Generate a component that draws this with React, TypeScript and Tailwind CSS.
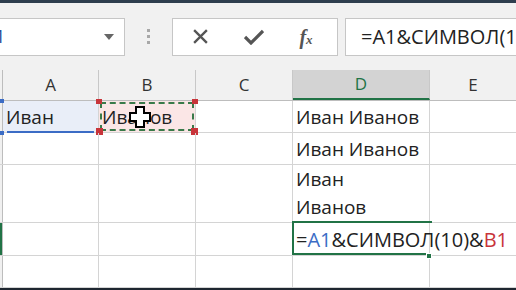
import React from "react";

const font = { fontFamily: '"Open Sans", "Noto Sans", sans-serif' };

const Cell = ({
  w,
  children,
  className = "",
}: {
  w: string;
  children?: React.ReactNode;
  className?: string;
}) => (
  <div
    className={`relative shrink-0 border-r border-[#d4d4d4] flex items-end pl-[3px] pb-[1px] ${w} ${className}`}
  >
    {children}
  </div>
);

const Row = ({ h, children, green = false }: { h: string; children: React.ReactNode; green?: boolean }) => (
  <div className={`flex border-b border-[#d4d4d4] ${h}`}>
    <div className={`shrink-0 w-[3px] border-r border-[#bdbdbd] ${green ? "bg-[#217346]" : "bg-[#f0f0f0]"}`} />
    {children}
  </div>
);

export default function App() {
  return (
    <div className="w-[516px] h-[290px] overflow-hidden bg-white text-[#222]" style={font}>
      <div className="h-[3px] bg-[#2e3e4e]" />
      {/* toolbar */}
      <div className="h-[67px] bg-[#f1f1f1] flex items-center">
        <div className="shrink-0 ml-[-2px] w-[127px] h-[38px] bg-white border border-[#c6c6c6] flex items-center justify-between pr-[10px] text-[18px]">
          <span className="text-[#1f4e9a] ml-[-4px]">1</span>
          <svg width="10" height="6" viewBox="0 0 10 6">
            <path d="M0 0 L10 0 L5 6 Z" fill="#666" />
          </svg>
        </div>
        <div className="shrink-0 w-[47px] flex flex-col items-center gap-[3px]">
          <span className="w-[3px] h-[3px] bg-[#a8a8a8]" />
          <span className="w-[3px] h-[3px] bg-[#a8a8a8]" />
          <span className="w-[3px] h-[3px] bg-[#a8a8a8]" />
        </div>
        <div className="shrink-0 w-[166px] h-[38px] bg-white border border-[#c6c6c6] flex items-center">
          <div className="w-[55px] flex justify-center">
            <svg width="17" height="17" viewBox="0 0 16 16">
              <path d="M2 2 L14 14 M14 2 L2 14" stroke="#555" strokeWidth="2.2" />
            </svg>
          </div>
          <div className="w-[52px] flex justify-center">
            <svg width="20" height="16" viewBox="0 0 20 16">
              <path d="M1 8 L7 14 L19 2" stroke="#555" strokeWidth="3.2" fill="none" />
            </svg>
          </div>
          <div className="w-[52px] flex justify-center">
            <span className="text-[#555] italic font-bold text-[20px]" style={{ fontFamily: '"Liberation Serif", serif' }}>
              f<span className="text-[13px]">x</span>
            </span>
          </div>
        </div>
        <div className="ml-[7px] min-w-0 flex-1 h-[38px] bg-white border border-[#c6c6c6] border-r-0 flex items-center pl-[15px] text-[20px] whitespace-nowrap overflow-hidden">
          =A1&amp;СИМВОЛ(10)&amp;B1
        </div>
      </div>
      {/* header */}
      <div className="flex h-[31px] bg-[#f1f1f1] border-b border-[#bdbdbd] text-[17px] text-[#333]">
        <div className="shrink-0 w-[3px] border-r border-[#bdbdbd]" />
        <div className="shrink-0 w-[96px] border-r border-[#c8c8c8] flex items-center justify-center">A</div>
        <div className="shrink-0 w-[97px] border-r border-[#c8c8c8] flex items-center justify-center">B</div>
        <div className="shrink-0 w-[97px] border-r border-[#c8c8c8] flex items-center justify-center">C</div>
        <div className="shrink-0 w-[137px] bg-[#d3d3d3] border-r border-[#c8c8c8] border-b-2 border-b-[#217346] flex items-center justify-center text-[#217346]">
          D
        </div>
        <div className="flex-1 flex items-center justify-center">E</div>
      </div>
      {/* rows */}
      <div className="text-[19px] leading-[28px]">
        <Row h="h-[32px]">
          <Cell w="w-[96px]" className="bg-[#e9eef8]">
            <span>Иван</span>
            <div className="absolute left-[4px] right-[4px] bottom-[-1px] h-[2px] bg-[#3b6cc5]" />
            <div className="absolute left-[-3px] top-[-2px] w-[4px] h-[4px] bg-[#3b6cc5]" />
            <div className="absolute left-[-3px] bottom-[-3px] w-[4px] h-[4px] bg-[#3b6cc5]" />
          </Cell>
          <Cell w="w-[97px]" className="bg-[#fbe6e6]">
            <span>Иванов</span>
            <div className="absolute inset-[1px] border-2 border-dashed border-[#3a7a4a]" />
            <div className="absolute left-[-3px] top-[-2px] w-[6px] h-[5px] bg-[#c8343a]" />
            <div className="absolute right-[-3px] top-[-2px] w-[6px] h-[5px] bg-[#c8343a]" />
            <div className="absolute left-[-3px] bottom-[-3px] w-[7px] h-[7px] bg-[#c8343a]" />
            <div className="absolute right-[-3px] bottom-[-3px] w-[7px] h-[7px] bg-[#c8343a]" />
            <svg className="absolute left-[30px] top-[5px]" width="22" height="22" viewBox="0 0 22 22">
              <path d="M7 1 H15 V7 H21 V15 H15 V21 H7 V15 H1 V7 H7 Z" fill="white" stroke="black" strokeWidth="2" />
            </svg>
          </Cell>
          <Cell w="w-[97px]" />
          <Cell w="w-[137px]">Иван Иванов</Cell>
          <div className="flex-1" />
        </Row>
        <Row h="h-[32px]">
          <Cell w="w-[96px]" />
          <Cell w="w-[97px]" />
          <Cell w="w-[97px]" />
          <Cell w="w-[137px]">Иван Иванов</Cell>
          <div className="flex-1" />
        </Row>
        <Row h="h-[58px]">
          <Cell w="w-[96px]" />
          <Cell w="w-[97px]" />
          <Cell w="w-[97px]" />
          <Cell w="w-[137px]" className="pb-[0px]">
            <span>
              Иван
              <br />
              Иванов
            </span>
          </Cell>
          <div className="flex-1" />
        </Row>
        <Row h="h-[33px]" green>
          <Cell w="w-[96px]" />
          <Cell w="w-[97px]" />
          <Cell w="w-[97px]" />
          <Cell w="w-[137px]" className="overflow-visible z-10">
            <span className="whitespace-nowrap text-[20px]">
              =<span className="text-[#3b6cc5]">A1</span>&amp;СИМВОЛ(10)&amp;<span className="text-[#c8343a]">B1</span>
            </span>
            <div className="absolute left-[-1px] top-[-2px] w-[140px] h-[34px] border-t-2 border-l-2 border-b-2 border-[#217346] pointer-events-none" />
            <div className="absolute right-[-3px] bottom-[-4px] w-[6px] h-[6px] bg-[#217346] border border-white" />
          </Cell>
          <div className="flex-1" />
        </Row>
        <Row h="h-[32px]">
          <Cell w="w-[96px]" />
          <Cell w="w-[97px]" />
          <Cell w="w-[97px]" />
          <Cell w="w-[137px]" />
          <div className="flex-1" />
        </Row>
      </div>
      <div className="h-[3px] bg-[#1e2630]" />
    </div>
  );
}
